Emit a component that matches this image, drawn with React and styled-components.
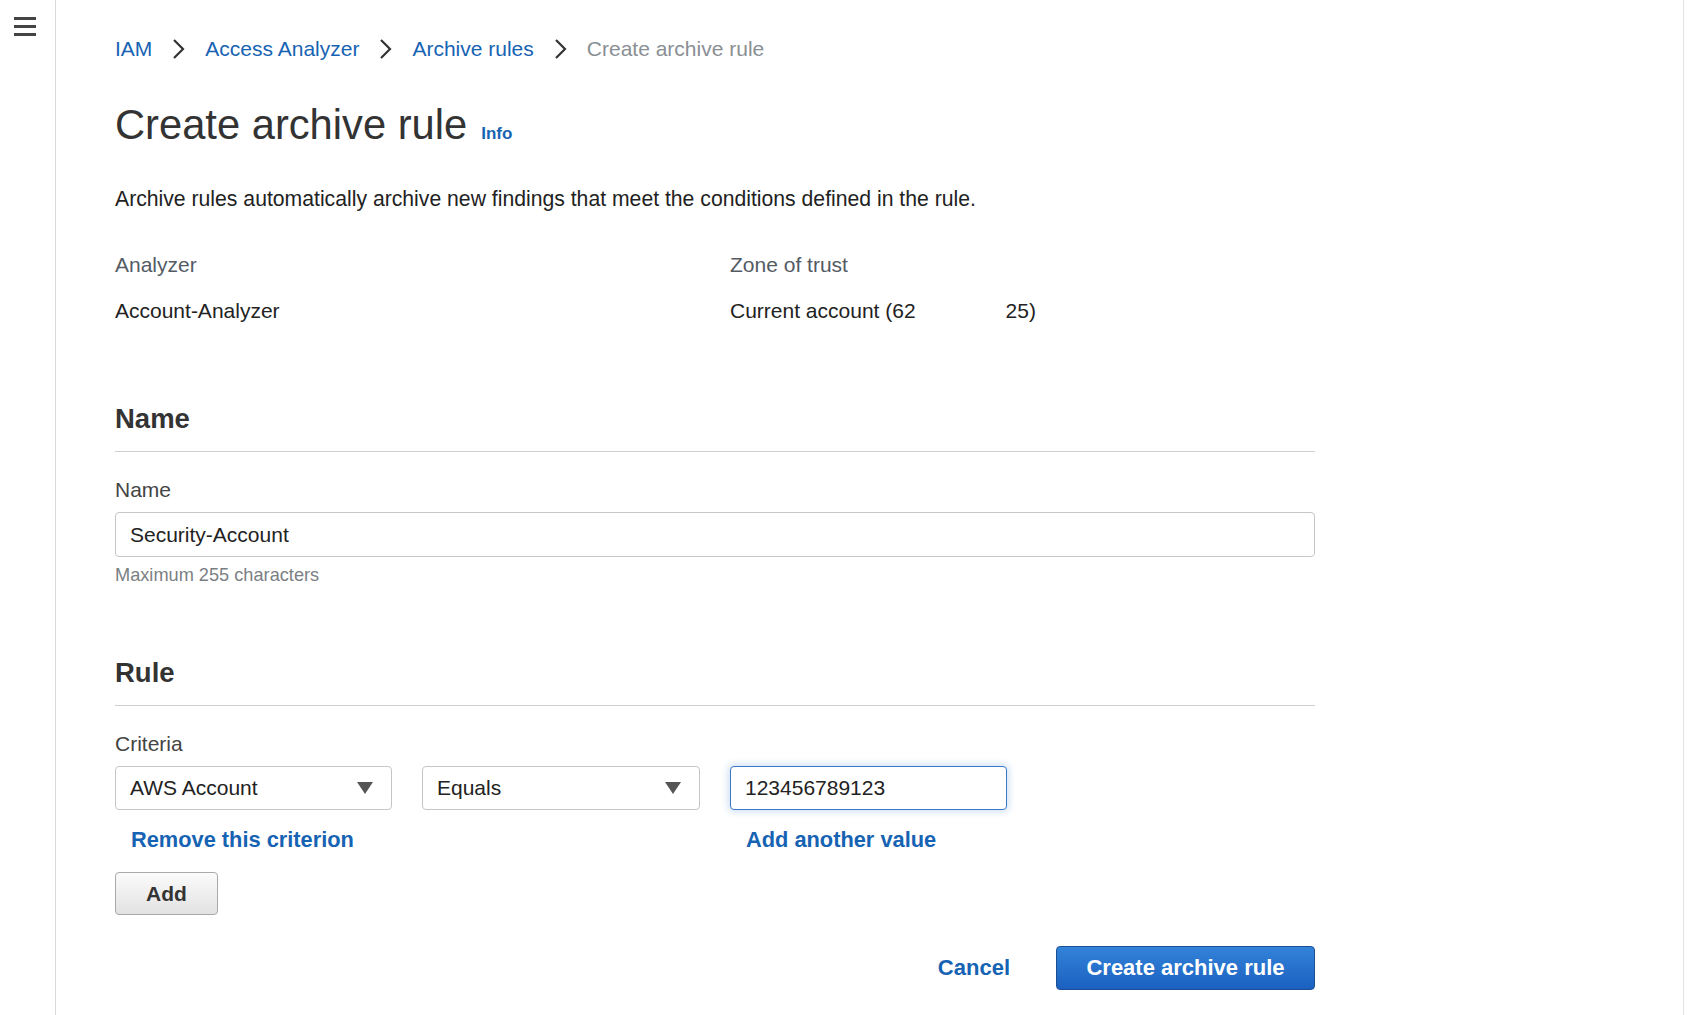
import React from "react";
import styled, { createGlobalStyle } from "styled-components";

const GlobalStyle = createGlobalStyle`
  html, body { margin: 0; padding: 0; background: #fff; }
  body { font-family: "Liberation Sans", Arial, sans-serif; color: #16191f; }
  * { box-sizing: border-box; }
`;

const Shell = styled.div`
  display: flex;
  min-height: 1015px;
  background: #fff;
`;

const Sidebar = styled.nav`
  width: 56px;
  flex: 0 0 56px;
  border-right: 1px solid #d9d9d9;
  padding: 17px 0 0 14px;
`;

const MenuButton = styled.button`
  width: 22px;
  height: 19px;
  padding: 0;
  border: 0;
  background: none;
  display: flex;
  flex-direction: column;
  justify-content: space-between;
  cursor: pointer;
  span {
    display: block;
    height: 3px;
    background: #444;
  }
`;

const Main = styled.main`
  flex: 1;
  padding: 37px 0 0 59px;
`;

const RightRail = styled.aside`
  width: 15px;
  flex: 0 0 15px;
  border-left: 1px solid #e3e3e3;
`;

const Content = styled.div`
  width: 1200px;
`;

const Breadcrumbs = styled.div`
  display: flex;
  align-items: center;
  height: 24px;
  font-size: 21px;
`;

const Crumb = styled.a`
  color: ${(p) => (p.$current ? "#8a8f94" : "#1763b3")};
  text-decoration: none;
  line-height: 24px;
`;

const Sep = styled.svg`
  margin: 0 ${(p) => p.$gap}px;
  flex: 0 0 auto;
`;

const TitleRow = styled.div`
  display: flex;
  align-items: baseline;
  gap: 14px;
  margin-top: 39px;
`;

const Title = styled.h1`
  margin: 0;
  font-size: 41.7px;
  line-height: 50px;
  font-weight: 400;
  color: #333;
`;

const InfoLink = styled.a`
  font-size: 17px;
  font-weight: 700;
  color: #1763b3;
  text-decoration: none;
`;

const Description = styled.p`
  margin: 37px 0 0;
  font-size: 21.2px;
  line-height: 24px;
  color: #222;
`;

const Details = styled.div`
  display: grid;
  grid-template-columns: 615px 1fr;
  margin-top: 42px;
`;

const DetailLabel = styled.div`
  font-size: 21px;
  line-height: 24px;
  color: #545b64;
`;

const DetailValue = styled.div`
  font-size: 21px;
  line-height: 24px;
  color: #222;
  margin-top: 22px;
  display: flex;
`;

const Redacted = styled.span`
  display: inline-block;
  width: 90px;
`;

const Section = styled.section`
  margin-top: ${(p) => p.$top}px;
`;

const SectionHeader = styled.h2`
  margin: 0;
  font-size: 27.5px;
  line-height: 32px;
  font-weight: 700;
  color: #333;
  padding-bottom: 16px;
  border-bottom: 1px solid #cfcfcf;
`;

const FieldLabel = styled.div`
  margin-top: 26px;
  font-size: 21px;
  line-height: 24px;
  color: #444;
`;

const TextInput = styled.div`
  margin-top: 10px;
  height: 45px;
  border: 1px solid #c6c6c6;
  border-radius: 4px;
  padding: 0 14px;
  display: flex;
  align-items: center;
  font-size: 21px;
  color: #222;
  background: #fff;
  ${(p) =>
    p.$focused &&
    `
    border-color: #3a79c7;
    box-shadow: 0 0 7px 2px rgba(40, 120, 210, 0.22);
  `}
`;

const Hint = styled.div`
  margin-top: 7px;
  font-size: 18.2px;
  line-height: 22px;
  color: #7b7f84;
`;

const CriteriaGrid = styled.div`
  display: grid;
  grid-template-columns: 277px 278px 277px;
  column-gap: 30px;
  margin-top: 10px;
`;

const Select = styled.div`
  height: 44px;
  border: 1px solid #c6c6c6;
  border-radius: 4px;
  padding: 0 18px 0 14px;
  display: flex;
  align-items: center;
  justify-content: space-between;
  font-size: 21px;
  color: #222;
  background: #fff;
`;

const ValueInput = styled(TextInput)`
  margin-top: 0;
  height: 44px;
`;

const InlineLink = styled.a`
  display: block;
  margin-top: 18px;
  padding-left: 16px;
  font-size: 21.8px;
  line-height: 24px;
  font-weight: 700;
  color: #1763b3;
  text-decoration: none;
  grid-row: 2;
  grid-column: ${(p) => p.$col};
`;

const SecondaryButton = styled.button`
  margin-top: 20px;
  width: 103px;
  height: 43px;
  border: 1px solid #a9a9a9;
  border-radius: 4px;
  background: linear-gradient(#fbfbfb, #e2e2e2);
  font-family: inherit;
  font-size: 21px;
  font-weight: 700;
  color: #333;
  cursor: pointer;
`;

const Footer = styled.div`
  display: flex;
  justify-content: flex-end;
  align-items: center;
  gap: 46px;
  margin-top: 31px;
`;

const LinkButton = styled.button`
  border: 0;
  background: none;
  padding: 0;
  font-family: inherit;
  font-size: 22px;
  font-weight: 700;
  color: #1763b3;
  cursor: pointer;
`;

const PrimaryButton = styled.button`
  width: 259px;
  height: 44px;
  border: 1px solid #1a4f93;
  border-radius: 4px;
  background: linear-gradient(#3383d9, #1b60c0);
  font-family: inherit;
  font-size: 22px;
  font-weight: 700;
  color: #fff;
  cursor: pointer;
`;

const Chevron = ({ gap = 20 }) => (
  <Sep $gap={gap} width="13" height="22" viewBox="0 0 13 22">
    <path d="M2 2 L11 11 L2 20" fill="none" stroke="#333" strokeWidth="2.2" />
  </Sep>
);

const Caret = () => (
  <svg width="16" height="12" viewBox="0 0 16 12">
    <path d="M0 0 H16 L8 12 Z" fill="#555" />
  </svg>
);

export default function App() {
  return (
    <>
      <GlobalStyle />
      <Shell>
        <Sidebar>
          <MenuButton aria-label="Menu">
            <span />
            <span />
            <span />
          </MenuButton>
        </Sidebar>
        <Main>
          <Content>
            <Breadcrumbs>
              <Crumb href="#">IAM</Crumb>
              <Chevron />
              <Crumb href="#">Access Analyzer</Crumb>
              <Chevron />
              <Crumb href="#">Archive rules</Crumb>
              <Chevron />
              <Crumb $current>Create archive rule</Crumb>
            </Breadcrumbs>

            <TitleRow>
              <Title>Create archive rule</Title>
              <InfoLink href="#">Info</InfoLink>
            </TitleRow>

            <Description>
              Archive rules automatically archive new findings that meet the conditions defined in the rule.
            </Description>

            <Details>
              <div>
                <DetailLabel>Analyzer</DetailLabel>
                <DetailValue>Account-Analyzer</DetailValue>
              </div>
              <div>
                <DetailLabel>Zone of trust</DetailLabel>
                <DetailValue>
                  <span>Current account (62</span>
                  <Redacted />
                  <span>25)</span>
                </DetailValue>
              </div>
            </Details>

            <Section $top={80}>
              <SectionHeader>Name</SectionHeader>
              <FieldLabel>Name</FieldLabel>
              <TextInput>Security-Account</TextInput>
              <Hint>Maximum 255 characters</Hint>
            </Section>

            <Section $top={71}>
              <SectionHeader>Rule</SectionHeader>
              <FieldLabel>Criteria</FieldLabel>
              <CriteriaGrid>
                <Select>
                  AWS Account
                  <Caret />
                </Select>
                <Select>
                  Equals
                  <Caret />
                </Select>
                <ValueInput $focused>123456789123</ValueInput>
                <InlineLink href="#" $col={1}>Remove this criterion</InlineLink>
                <InlineLink href="#" $col={3}>Add another value</InlineLink>
              </CriteriaGrid>
              <SecondaryButton>Add</SecondaryButton>
            </Section>

            <Footer>
              <LinkButton>Cancel</LinkButton>
              <PrimaryButton>Create archive rule</PrimaryButton>
            </Footer>
          </Content>
        </Main>
        <RightRail />
      </Shell>
    </>
  );
}
